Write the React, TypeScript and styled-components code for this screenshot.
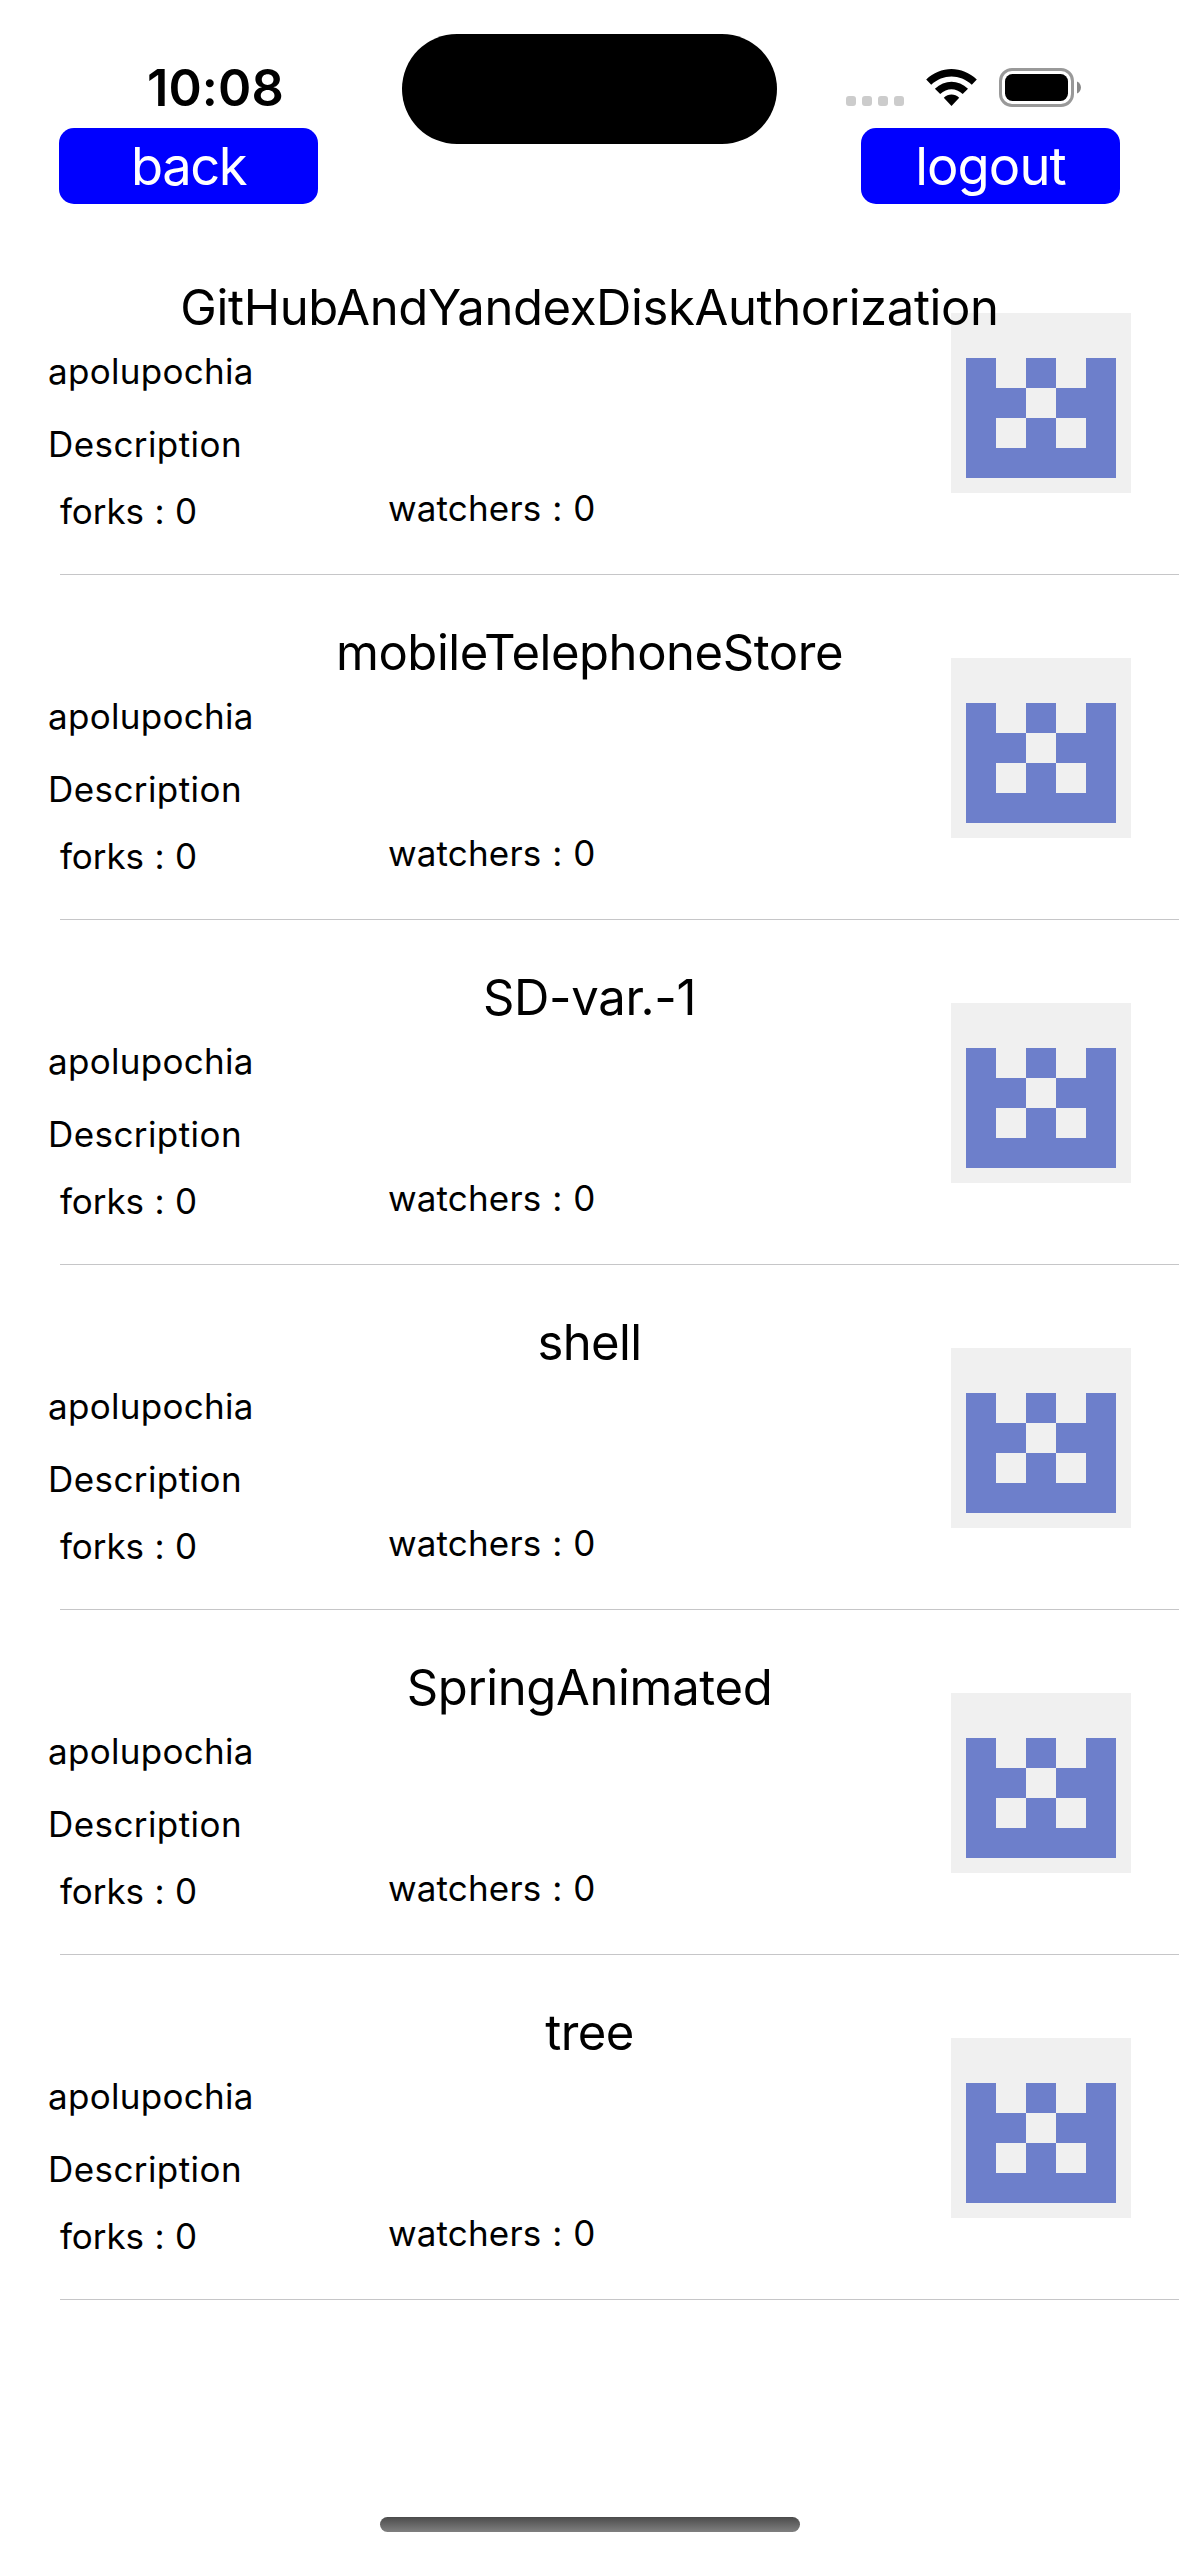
import React from 'react';
import styled, { createGlobalStyle } from 'styled-components';

const GlobalStyle = createGlobalStyle`
  *, *::before, *::after { box-sizing: border-box; }
  html, body { margin: 0; padding: 0; background: #fff; }
  body { font-family: Inter, "Liberation Sans", sans-serif; color: #000; }
`;

const Screen = styled.div`
  position: relative;
  display: flex;
  flex-direction: column;
  width: 1179px;
  height: 2556px;
  overflow: hidden;
  background: #fff;
`;

const StatusBar = styled.header`
  display: flex;
  justify-content: space-between;
  align-items: flex-start;
  height: 128px;
  padding: 0 98px 0 147px;
`;

const Clock = styled.time`
  margin-top: 58px;
  font-size: 50.5px;
  line-height: 60px;
  font-weight: 600;
  letter-spacing: 0.1px;
  white-space: nowrap;
`;

const Island = styled.div`
  position: absolute;
  top: 34px;
  left: 402px;
  width: 375px;
  height: 110px;
  border-radius: 55px;
  background: #000;
`;

const StatusIcons = styled.div`
  display: flex;
  margin-top: 68px;
`;

const Toolbar = styled.nav`
  display: flex;
  justify-content: space-between;
  height: 102px;
  padding: 0 59px;
`;

const BarButton = styled.button<{ $tracking: number }>`
  width: 259px;
  height: 76px;
  padding: 1px 0 0;
  border: 0;
  border-radius: 15px;
  background: #0000ff;
  color: #fff;
  font-family: inherit;
  font-size: 52.5px;
  font-weight: 400;
  line-height: 75px;
  letter-spacing: ${(p) => p.$tracking}px;
  text-align: center;
`;

const List = styled.main`
  display: flex;
  flex-direction: column;
`;

const Row = styled.article`
  display: grid;
  grid-template-columns: 951px 180px 48px;
  grid-template-rows: 60px 56px 73px 1fr 1px;
  height: 345px;
  padding-top: 47px;
`;

const Title = styled.h2<{ $tracking: number }>`
  grid-column: 1 / -1;
  grid-row: 1;
  z-index: 1;
  margin: 0;
  padding-top: 1px;
  text-align: center;
  font-size: 49px;
  line-height: 60px;
  font-weight: 400;
  letter-spacing: ${(p) => p.$tracking}px;
  white-space: nowrap;
`;

const Label = styled.p<{ $tracking: number }>`
  margin: 0;
  font-size: 35px;
  line-height: 44px;
  letter-spacing: ${(p) => p.$tracking}px;
  word-spacing: 0.8px;
  white-space: nowrap;
`;

const Owner = styled(Label)`
  grid-column: 1;
  grid-row: 2;
  padding: 12px 0 0 48px;
`;

const Description = styled(Label)`
  grid-column: 1;
  grid-row: 3;
  padding: 29px 0 0 48px;
`;

const Stats = styled.div`
  grid-column: 1;
  grid-row: 4;
  display: grid;
  grid-template-columns: 328px 1fr;
  padding: 20px 0 0 60px;
`;

const Forks = styled(Label)`
  padding-top: 3px;
`;

const Avatar = styled.svg`
  grid-column: 2;
  grid-row: 1 / 5;
  margin-top: 36px;
  width: 180px;
  height: 180px;
`;

const Separator = styled.div`
  grid-column: 1 / -1;
  grid-row: 5;
  margin-left: 60px;
  background: #c6c6c8;
`;

const HomeIndicator = styled.div`
  width: 420px;
  height: 15px;
  margin: auto auto 24px 380px;
  border-radius: 8px;
  background: linear-gradient(#4b4b4b, #808080);
`;

const Identicon = () => (
  <Avatar viewBox="0 0 180 180" shapeRendering="crispEdges">
    <rect width="180" height="180" fill="#f0f0f0" />
    <path
      fill="#6d7fcb"
      fillRule="evenodd"
      d="M15 45h30v30h30v-30h30v30h30v-30h30v120h-150z M75 75h30v30h-30z M45 105h30v30h-30z M105 105h30v30h-30z"
    />
  </Avatar>
);

const StatusGlyphs = () => (
  <svg width="235" height="40" viewBox="846 68 235 40">
    {[846, 862, 878, 894].map((x) => (
      <rect key={x} x={x} y="96" width="10" height="10" rx="3" fill="#ccc" />
    ))}
    <path d="M926.2 79.6C940.5 65.5 962.3 65.5 976.8 79.6L971.8 84.8C960 73.8 943 73.8 931.2 84.8Z" />
    <path d="M934.9 88.7C944.8 79.3 958.3 79.3 968 88.7L962.7 94C955.8 87.6 947.1 87.6 940.2 94Z" />
    <path d="M943.8 97.7C948.3 93.5 954.7 93.5 959.2 97.7L951.5 106Z" />
    <rect x="1000.5" y="69.5" width="72" height="36" rx="11.5" fill="none" stroke="#999" strokeWidth="3" />
    <rect x="1005" y="74" width="63" height="27" rx="7.5" />
    <path d="M1077 81.5C1082.3 83.5 1082.3 91.5 1077 93.5Z" fill="#888" />
  </svg>
);

const repositories = [
  { name: 'GitHubAndYandexDiskAuthorization', tracking: -0.38 },
  { name: 'mobileTelephoneStore', tracking: -0.45 },
  { name: 'SD-var.-1', tracking: -0.35 },
  { name: 'shell', tracking: -0.6 },
  { name: 'SpringAnimated', tracking: -0.36 },
  { name: 'tree', tracking: -0.6 },
];

export default function App() {
  return (
    <>
      <GlobalStyle />
      <Screen>
        <StatusBar>
          <Clock>10:08</Clock>
          <Island />
          <StatusIcons>
            <StatusGlyphs />
          </StatusIcons>
        </StatusBar>
        <Toolbar>
          <BarButton $tracking={-1.5}>back</BarButton>
          <BarButton $tracking={-0.9}>logout</BarButton>
        </Toolbar>
        <List>
          {repositories.map((repo) => (
            <Row key={repo.name}>
              <Identicon />
              <Title $tracking={repo.tracking}>{repo.name}</Title>
              <Owner $tracking={0.3}>apolupochia</Owner>
              <Description $tracking={0.42}>Description</Description>
              <Stats>
                <Forks $tracking={-0.08}>forks : 0</Forks>
                <Label $tracking={0.15}>watchers : 0</Label>
              </Stats>
              <Separator />
            </Row>
          ))}
        </List>
        <HomeIndicator />
      </Screen>
    </>
  );
}
